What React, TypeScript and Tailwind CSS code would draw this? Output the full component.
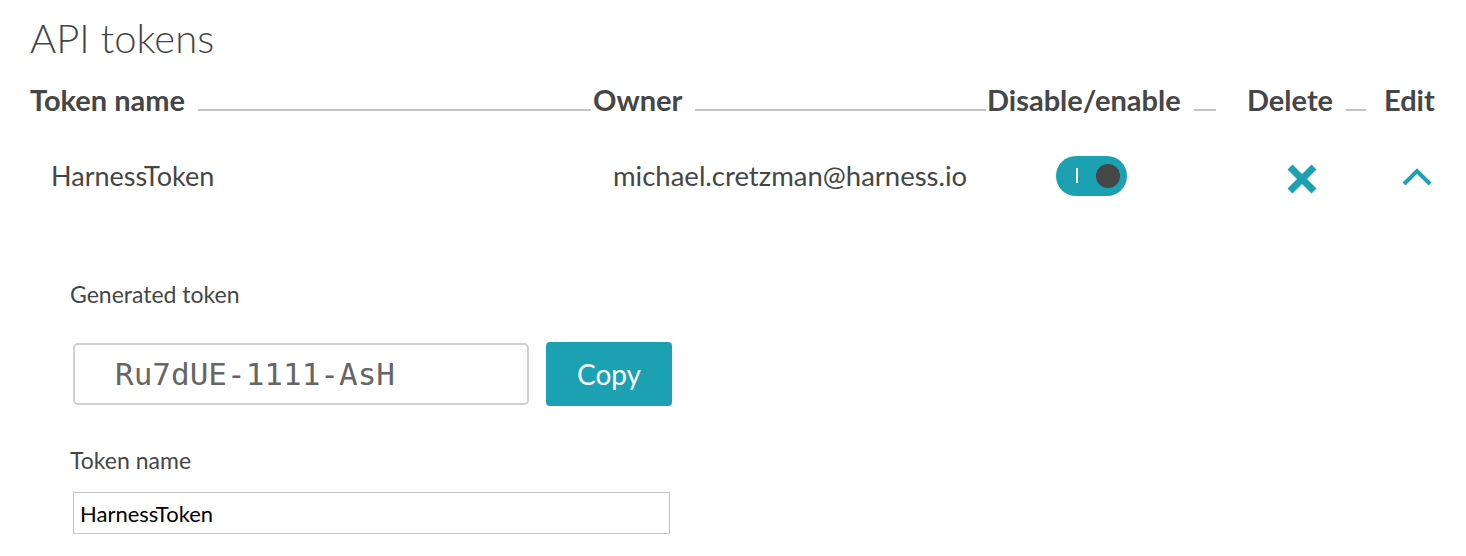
import React from "react";

const font = { fontFamily: "Lato, 'Open Sans', sans-serif" };

function HeaderCell({ label, width, lineMr, line = true }: { label: string; width: string; lineMr: string; line?: boolean }) {
  return (
    <div className={`flex items-end ${width}`}>
      <span className="font-bold text-[29px] leading-[32px] text-[#454646] whitespace-nowrap">{label}</span>
      {line && <div className={`flex-1 h-[2px] bg-[#c4c4c8] ml-[13px] mb-[5px] ${lineMr}`} />}
    </div>
  );
}

export default function App() {
  return (
    <div className="w-[1466px] h-[556px] bg-white overflow-hidden pl-[30px] text-[#454646]" style={font}>
      <h1 className="font-light text-[40px] leading-[48px] pt-[14px] text-[#454646]">API tokens</h1>
      <div className="flex items-end mt-[22px]">
        <HeaderCell label="Token name" width="w-[563px]" lineMr="mr-[2px]" />
        <HeaderCell label="Owner" width="w-[394px]" lineMr="mr-[1px]" />
        <HeaderCell label="Disable/enable" width="w-[260px]" lineMr="mr-[31px]" />
        <HeaderCell label="Delete" width="w-[137px]" lineMr="mr-[18px]" />
        <HeaderCell label="Edit" width="w-[60px]" lineMr="" line={false} />
      </div>
      <div className="flex items-center h-[40px] mt-[40px]">
        <div className="w-[563px] pl-[21px] text-[27px]">HarnessToken</div>
        <div className="w-[394px] pl-[20px] text-[27.5px]">michael.cretzman@harness.io</div>
        <div className="w-[260px] pl-[69px]">
          <div className="w-[71px] h-[40px] rounded-full bg-[#1ba1b2] flex items-center relative">
            <div className="absolute left-[20px] top-[12px] w-[2px] h-[15px] bg-white" />
            <div className="absolute left-[40px] top-[8px] w-[24px] h-[24px] rounded-full bg-[#454646]" />
          </div>
        </div>
        <div className="w-[137px] pl-[40px] pt-[6px]">
          <svg width="30" height="30" viewBox="0 0 30 30">
            <path d="M3 3 L27 27 M27 3 L3 27" stroke="#1ba1b2" strokeWidth="7" />
          </svg>
        </div>
        <div className="pl-[18px] pt-[2px]">
          <svg width="30" height="18" viewBox="0 0 30 18">
            <path d="M2 16 L15 3 L28 16" stroke="#1ba1b2" strokeWidth="4" fill="none" />
          </svg>
        </div>
      </div>
      <div className="pl-[40px] pt-[86px]">
        <div className="text-[23px] leading-[24px] font-normal">Generated token</div>
        <div className="flex items-center mt-[36px] ml-[3px] gap-[17px]">
          <div className="w-[456px] h-[62px] border-2 border-[#d0d0d0] rounded-[5px] flex items-center pl-[40px] text-[#666] text-[31px]" style={{ fontFamily: "'DejaVu Sans Mono', monospace" }}>
            Ru7dUE-1111-AsH
          </div>
          <button className="w-[126px] h-[64px] rounded-[4px] bg-[#1ba1b2] text-white text-[28px] font-normal">Copy</button>
        </div>
        <div className="text-[23px] leading-[24px] font-normal mt-[42px]">Token name</div>
        <div className="w-[597px] h-[42px] border border-[#c5c5c5] mt-[20px] ml-[3px] flex items-center pl-[6px] text-[22px] text-black">
          HarnessToken
        </div>
      </div>
    </div>
  );
}
